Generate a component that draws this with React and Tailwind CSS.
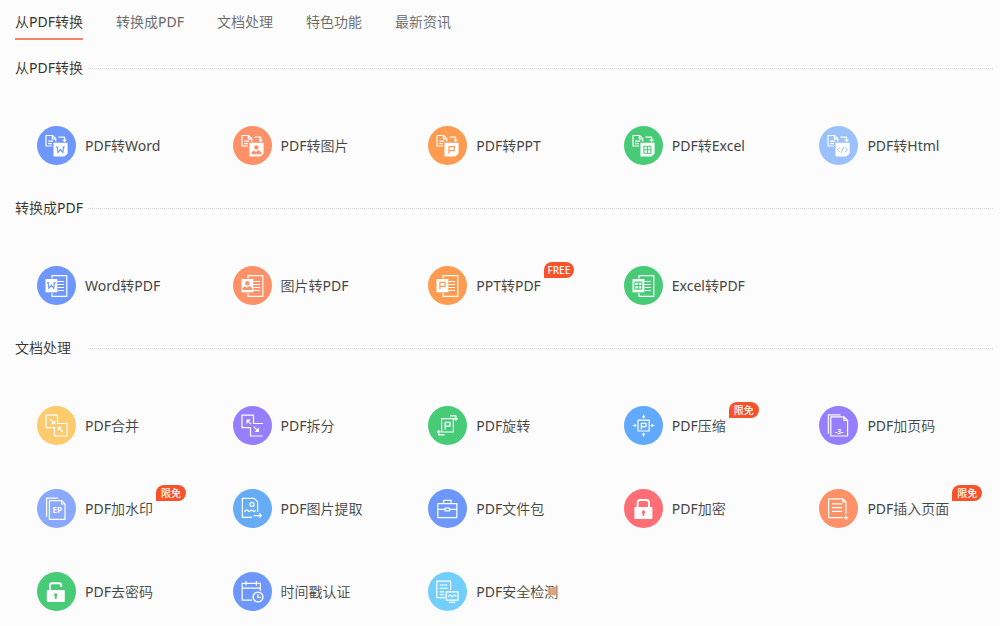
import React from "react";

const line = { fill: "none", stroke: "#fff", strokeWidth: 1.2, strokeLinejoin: "round" };

function Letter({ x, y, size = 8, fill = "#fff", children }) {
  return (
    <text
      x={x}
      y={y}
      fontSize={size}
      fontWeight="700"
      fontFamily='"Open Sans", sans-serif'
      textAnchor="middle"
      fill={fill}
    >
      {children}
    </text>
  );
}

function Picture({ color }) {
  return (
    <g fill={color}>
      <circle cx="0" cy="-2.4" r="2.2" />
      <path d="M-4.8 4.5V2.4L-2.4.6-.4 2.2 2 .2 4.8 2.4V4.5Z" />
    </g>
  );
}

function Sheet({ color }) {
  return (
    <path
      d="M-3.5-3.5H3.5V3.5H-3.5ZM0-3.5V3.5M-3.5 0H3.5"
      fill="none"
      stroke={color}
      strokeWidth="1.1"
    />
  );
}

function Mark({ kind, color }) {
  if (kind === "image") return <Picture color={color} />;
  if (kind === "excel") return <Sheet color={color} />;
  if (kind === "html")
    return (
      <path
        d="M-2.5-2.5-5 0-2.5 2.5M2.5-2.5 5 0 2.5 2.5M1-3-1 3"
        fill="none"
        stroke={color}
        strokeWidth="1"
      />
    );
  if (kind === "word")
    return (
      <path
        d="M-3.2-2.8-2.4 2.8 0-.4 2.4 2.8 3.2-2.8M-4.6-2.8H-2M2-2.8H4.6"
        fill="none"
        stroke={color}
        strokeWidth="1.1"
      />
    );
  return (
    <path
      d="M-2.4 4V-3.2H2.8V.8H-2.4"
      fill="none"
      stroke={color}
      strokeWidth="1.2"
    />
  );
}

function FromPdf({ kind, color }) {
  return (
    <g>
      <path {...line} d="M15 20H9V9.5H15.5L18.8 12.6V15.5M15.3 9.5V12.8H18.8" />
      <path {...line} d="M11.2 15.2H16.2M11.2 17.6H14.8" />
      <path {...line} d="M21.5 11.2H27.6V15M25.8 13.6 27.6 15.4 29.4 13.6" />
      <path fill="#fff" d="M16.5 16.8H30.6V27.4L27.4 30.5H16.5Z" />
      <g transform="translate(23.4 23.8)">
        <Mark kind={kind} color={color} />
      </g>
    </g>
  );
}

function ToPdf({ kind, color }) {
  return (
    <g>
      <path {...line} d="M15 12.5V9.6H29.8V30.4H15V27" />
      <path {...line} d="M20.5 15.5H27M20.5 18.5H27M20.5 21.5H27M20.5 24.5H27" />
      <path fill="#fff" d="M8.5 13H20.3V26.3H8.5Z" />
      <g transform="translate(14.3 19.6)">
        <Mark kind={kind} color={color} />
      </g>
    </g>
  );
}

const drawings = {
  merge: (
    <g {...line}>
      <path d="M9 9.2H20.5V17.5H30V30H17.5V21.6H9Z" />
      <path d="M13 13 17.4 17.4M26 26 21.6 21.6" />
      <path fill="#fff" stroke="none" d="M18.2 14V18.2H14ZM20.8 25V20.8H25Z" />
    </g>
  ),
  split: (
    <g {...line}>
      <path d="M30 17.5H20.5V9.2H9V21.6H17.5V30H29.5" />
      <path d="M14.2 14.4 18 18.2M20.8 20.8 25 25" />
      <path fill="#fff" stroke="none" d="M13.4 18V13.6H17.8ZM26 21.6V26H21.6Z" />
    </g>
  ),
  rotate: (
    <g {...line}>
      <path d="M13.6 12.6H25.4V26H13.6Z" />
      <path d="M22 9.8H28V13.5M26.3 12.2 28 14 29.7 12.2M16.5 28.8H10.8V25M9.1 26.4 10.8 24.6 12.5 26.4" />
      <path strokeWidth="1.3" d="M17.2 23.4V16.4H22V20.2H17.2" />
    </g>
  ),
  compress: (
    <g {...line}>
      <path d="M14 14.2H25.2V25H14Z" />
      <path strokeWidth="1.3" d="M17.4 23.2V17.4H22V20.6H17.4" />
      <path d="M8.8 19.5H12M27.2 19.5H30.4M19.6 8.8V12M19.6 27.2V30.4" />
      <path fill="#fff" stroke="none" d="M10.6 17.6 12.8 19.5 10.6 21.4ZM28.6 17.6 26.4 19.5 28.6 21.4ZM17.7 10.4H21.5L19.6 12.6ZM17.7 28.8H21.5L19.6 26.6Z" />
    </g>
  ),
  pageNumber: (
    <g>
      <path {...line} d="M11.8 10.8H24.8L28.6 14.4V30H11.8ZM24.8 10.8V14.4H28.6" />
      <path {...line} d="M21.5 8.8H9.4V27.8" />
      <Letter x={20.2} y={28} size={7}>-3-</Letter>
    </g>
  ),
  watermark: (
    <g>
      <path {...line} d="M12.4 11.6H24.8L28 14.8V30.4H12.4ZM24.6 11.6V15H28" />
      <path {...line} d="M21 9.2H9.6V27.8" />
      <Letter x={20.2} y={24.4} size={8}>EP</Letter>
    </g>
  ),
  extract: (
    <g {...line}>
      <path d="M19 28.4H9.4V9.4H21.2L24.6 12.8V23" />
      <circle cx="19" cy="15.4" r="2" />
      <path d="M11.4 22.8 13.8 20.8 16 22.6 18.6 21 21 22.6 22.6 21.4M20.5 26.6H28.4M26.2 24.4 28.4 26.6 26.2 28.8" />
    </g>
  ),
  briefcase: (
    <g {...line}>
      <path d="M9.8 14.6H28.8V28.6H9.8ZM9.8 20.4H17M21.6 20.4H28.8M15.6 14.6V11.4H23.2V14.6M17 19.2H21.6V21.8H17Z" />
    </g>
  ),
  insert: (
    <g {...line}>
      <path d="M23.5 28.6H9.6V9.8H24L27 12.8V25M23.8 9.8V13H27" />
      <path d="M13 14.8H23.2M13 18.6H23.2M13 22.4H23.2M27 26.4V31M24.7 28.7H29.3" />
    </g>
  ),
  calendar: (
    <g {...line}>
      <path d="M19 28.2H9.2V11.4H27.4V19M9.2 16.2H27.4M13 9V13.4M23.4 9V13.4" />
      <circle strokeWidth="1.4" cx="25" cy="25" r="4.9" />
      <path d="M24.8 22V25.4H28" />
    </g>
  ),
  security: (
    <g {...line}>
      <path d="M17 25.6H8.8V9.2H22.6V18M11.8 13H19.4M11.8 16.4H19.4M11.8 19.8H16M11.8 22.6H16" />
      <path d="M18.2 19.8H30V28.2H18.2ZM21 30.4H27.4" />
      <path d="M20 24.6 22 23 24 24.8 26.2 23 28.4 24.6" />
    </g>
  ),
};

function Lock({ color, open }) {
  return (
    <g>
      <path
        fill="none"
        stroke="#fff"
        strokeWidth="1.9"
        d={
          open
            ? "M13 19V13.4Q13 11.2 15.2 11.2H22Q24.2 11.2 24.2 13.4V15"
            : "M13.6 19V13.8Q13.6 11 16.4 11H22.2Q25 11 25 13.8V19"
        }
      />
      <rect x={open ? 9.8 : 10.4} y="18" width="18" height="12" rx="0.8" fill="#fff" />
      <path
        fill={color}
        transform={open ? "translate(18.8 24)" : "translate(19.4 24)"}
        d="M-1.7-1A1.7 1.7 0 1 1 1.7-1Q1.7 0 .9.6V3H-.9V.6Q-1.7 0-1.7-1Z"
      />
    </g>
  );
}

function Icon({ type, kind, color }) {
  return (
    <svg className="size-[39px] shrink-0" viewBox="0 0 39 39" aria-hidden="true">
      <circle cx="19.5" cy="19.5" r="19.5" fill={color} />
      {type === "from" && <FromPdf kind={kind} color={color} />}
      {type === "to" && <ToPdf kind={kind} color={color} />}
      {type === "lock" && <Lock color={color} />}
      {type === "unlock" && <Lock color={color} open />}
      {drawings[type]}
    </svg>
  );
}

const tabs = ["从PDF转换", "转换成PDF", "文档处理", "特色功能", "最新资讯"];

const sections = [
  {
    title: "从PDF转换",
    items: [
      { label: "PDF转Word", type: "from", kind: "word", color: "#6e97fc" },
      { label: "PDF转图片", type: "from", kind: "image", color: "#ff9169" },
      { label: "PDF转PPT", type: "from", kind: "ppt", color: "#ff9b50" },
      { label: "PDF转Excel", type: "from", kind: "excel", color: "#48cb76" },
      { label: "PDF转Html", type: "from", kind: "html", color: "#9ac1fc" },
    ],
  },
  {
    title: "转换成PDF",
    items: [
      { label: "Word转PDF", type: "to", kind: "word", color: "#6e97fc" },
      { label: "图片转PDF", type: "to", kind: "image", color: "#ff9169" },
      { label: "PPT转PDF", type: "to", kind: "ppt", color: "#ff9b50", badge: "FREE" },
      { label: "Excel转PDF", type: "to", kind: "excel", color: "#48cb76" },
    ],
  },
  {
    title: "文档处理",
    items: [
      { label: "PDF合并", type: "merge", color: "#fdca6e" },
      { label: "PDF拆分", type: "split", color: "#967fff" },
      { label: "PDF旋转", type: "rotate", color: "#48cb76" },
      { label: "PDF压缩", type: "compress", color: "#60a9fc", badge: "限免" },
      { label: "PDF加页码", type: "pageNumber", color: "#967fff" },
      { label: "PDF加水印", type: "watermark", color: "#8ba9fc", badge: "限免" },
      { label: "PDF图片提取", type: "extract", color: "#65acf5" },
      { label: "PDF文件包", type: "briefcase", color: "#6e97fc" },
      { label: "PDF加密", type: "lock", color: "#ff6e74" },
      { label: "PDF插入页面", type: "insert", color: "#ff9169", badge: "限免" },
      { label: "PDF去密码", type: "unlock", color: "#48cb76" },
      { label: "时间戳认证", type: "calendar", color: "#6e97fc" },
      { label: "PDF安全检测", type: "security", color: "#72cffc" },
    ],
  },
];

function Tool({ label, badge, ...icon }) {
  return (
    <li className="flex h-[83px] items-center pl-[22px]">
      <a href="#" className="flex items-center gap-[9px] text-[#444]">
        <Icon {...icon} />
        <span className="relative whitespace-nowrap">
          {label}
          {badge && (
            <span className="absolute -top-[14px] left-full ml-[3px] flex h-4 w-[30px] items-center justify-center rounded-lg rounded-bl-none bg-[#f6522c] font-['Noto_Sans','Noto_Sans_CJK_SC',sans-serif] text-[10px] font-medium leading-none text-white">
              {badge}
            </span>
          )}
        </span>
      </a>
    </li>
  );
}

export default function App() {
  return (
    <main className="min-h-screen bg-[#fcfcfc] pr-[7px] pl-[15px] font-['Noto_Sans','Noto_Sans_CJK_SC_DemiLight','Noto_Sans_CJK_SC_Light','Noto_Sans_CJK_SC',sans-serif] text-[14px] leading-5 text-[#333]">
      <nav className="flex gap-[33px] pt-[6px]">
        {tabs.map((tab, i) => (
          <a
            key={tab}
            href="#"
            className={
              i === 0
                ? "flex h-[34px] items-center border-b-2 border-[#fb8261] text-[#333]"
                : "flex h-[34px] items-center border-b-2 border-transparent text-[#666]"
            }
          >
            {tab}
          </a>
        ))}
      </nav>
      <div className="pt-[7px]">
        {sections.map((section) => (
          <section key={section.title}>
            <div className="flex h-[42px] items-center gap-[5px]">
              <h2 className="min-w-[68px]">{section.title}</h2>
              <div className="flex-1 border-t border-dotted border-[#d4d4d4]" />
            </div>
            <ul className="grid grid-cols-5 pt-[15px]">
              {section.items.map((item) => (
                <Tool key={item.label} {...item} />
              ))}
            </ul>
          </section>
        ))}
      </div>
    </main>
  );
}
